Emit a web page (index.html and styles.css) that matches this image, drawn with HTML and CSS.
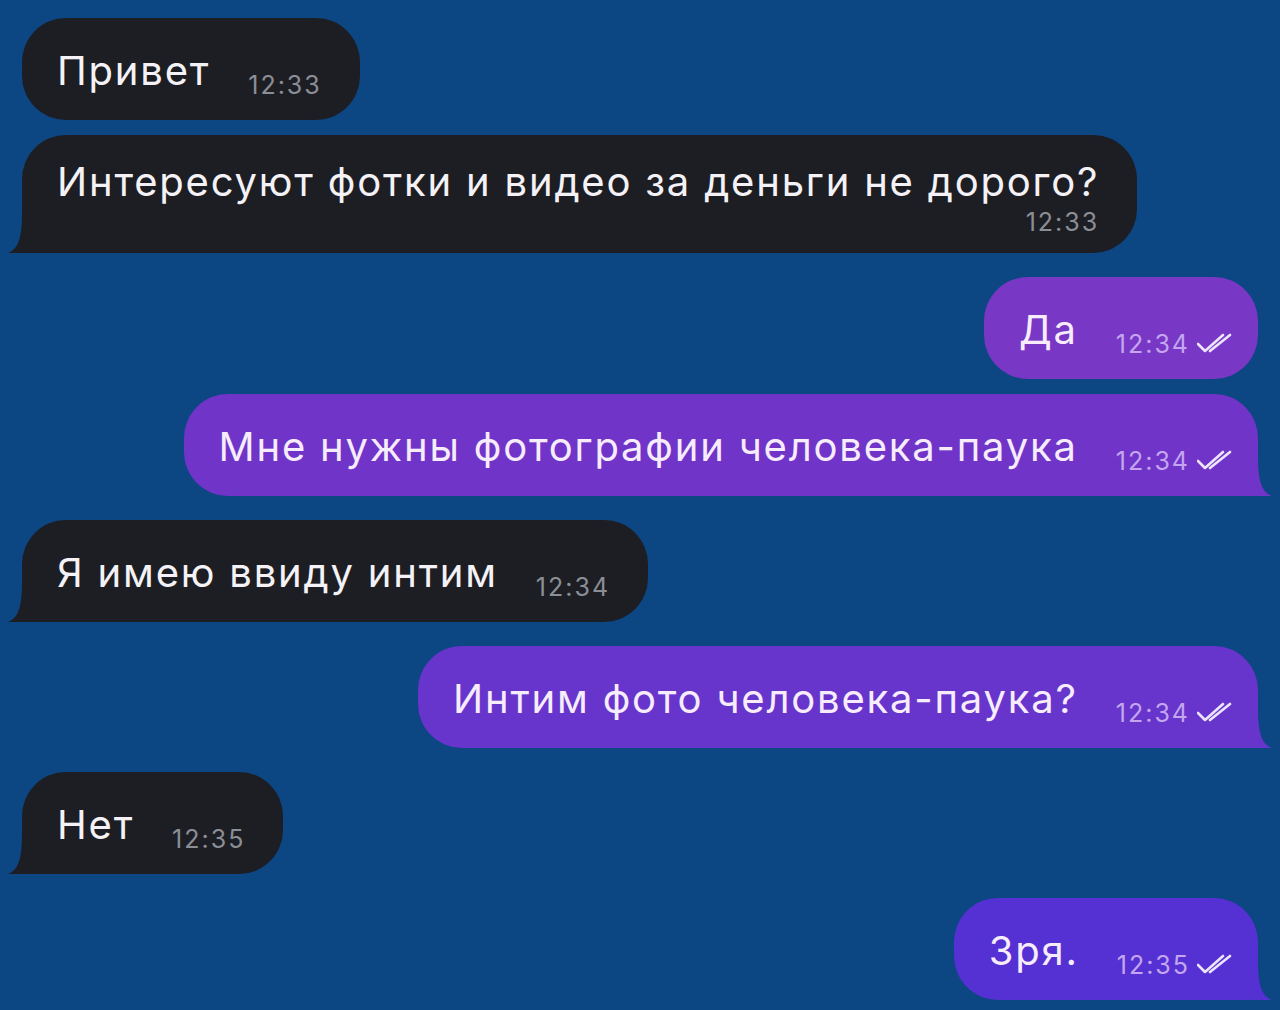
FILE: index.html
```html
<!DOCTYPE html>
<html lang="ru">
<head>
  <meta charset="UTF-8">
  <meta name="viewport" content="width=device-width, initial-scale=1.0">
  <title>Чат</title>
  <link rel="stylesheet" href="styles.css">
</head>
<body>
  <main class="chat">
    <div class="group in">
      <div class="bubble">
        <span class="text">Привет</span>
        <span class="time">12:33</span>
      </div>
      <div class="bubble stacked tail">
        <span class="text">Интересуют фотки и видео за деньги не дорого?</span>
        <span class="time">12:33</span>
        <svg class="tail-svg" viewBox="0 0 24 40"><path d="M24 0 L24 40 L0 40 C10 36 14 26 14 0 Z"/></svg>
      </div>
    </div>

    <div class="group out">
      <div class="bubble out-1">
        <span class="text">Да</span>
        <span class="time">12:34 <svg class="ticks" viewBox="0 0 36 22"><path d="M1 11 L8 18 L26 2 M13 18 L33 2"/></svg></span>
      </div>
      <div class="bubble out-2 tail">
        <span class="text">Мне нужны фотографии человека-паука</span>
        <span class="time">12:34 <svg class="ticks" viewBox="0 0 36 22"><path d="M1 11 L8 18 L26 2 M13 18 L33 2"/></svg></span>
        <svg class="tail-svg" viewBox="0 0 24 40"><path d="M0 0 L0 40 L24 40 C14 36 10 26 10 0 Z"/></svg>
      </div>
    </div>

    <div class="group in">
      <div class="bubble tail">
        <span class="text">Я имею ввиду интим</span>
        <span class="time">12:34</span>
        <svg class="tail-svg" viewBox="0 0 24 40"><path d="M24 0 L24 40 L0 40 C10 36 14 26 14 0 Z"/></svg>
      </div>
    </div>

    <div class="group out">
      <div class="bubble out-3 tail">
        <span class="text">Интим фото человека-паука?</span>
        <span class="time">12:34 <svg class="ticks" viewBox="0 0 36 22"><path d="M1 11 L8 18 L26 2 M13 18 L33 2"/></svg></span>
        <svg class="tail-svg" viewBox="0 0 24 40"><path d="M0 0 L0 40 L24 40 C14 36 10 26 10 0 Z"/></svg>
      </div>
    </div>

    <div class="group in">
      <div class="bubble tail">
        <span class="text">Нет</span>
        <span class="time">12:35</span>
        <svg class="tail-svg" viewBox="0 0 24 40"><path d="M24 0 L24 40 L0 40 C10 36 14 26 14 0 Z"/></svg>
      </div>
    </div>

    <div class="group out">
      <div class="bubble out-4 tail">
        <span class="text">Зря.</span>
        <span class="time">12:35 <svg class="ticks" viewBox="0 0 36 22"><path d="M1 11 L8 18 L26 2 M13 18 L33 2"/></svg></span>
        <svg class="tail-svg" viewBox="0 0 24 40"><path d="M0 0 L0 40 L24 40 C14 36 10 26 10 0 Z"/></svg>
      </div>
    </div>
  </main>
</body>
</html>
```

FILE: styles.css
```css
body {
  margin: 0;
  background-color: #0c4683;
  font-family: Inter, Roboto, "Noto Sans", sans-serif;
  color: #f4f2f6;
  overflow: hidden;
}
.chat {
  display: flex;
  flex-direction: column;
  gap: 24px;
  padding: 18px 22px 0 22px;
}
.group {
  display: flex;
  flex-direction: column;
  gap: 15px;
}
.group.in {
  align-items: flex-start;
}
.group.out {
  align-items: flex-end;
}
.bubble {
  position: relative;
  display: flex;
  align-items: flex-end;
  gap: 38px;
  padding: 30px 38px 26px 35px;
  border-radius: 44px;
  background-color: #1d1e23;
  color: #1d1e23;
}
.bubble .text {
  color: #f4f2f6;
  font-size: 40px;
  line-height: 46px;
  letter-spacing: 1.8px;
}
.bubble .time {
  display: flex;
  align-items: center;
  gap: 7px;
  font-size: 25px;
  letter-spacing: 2px;
  line-height: 30px;
  margin-bottom: -6px;
  color: #8b8e95;
}
.bubble.stacked {
  flex-direction: column;
  align-items: flex-end;
  gap: 0;
  padding: 24px 38px 16px 35px;
}
.bubble.stacked .text {
  align-self: flex-start;
}
.bubble.stacked .time {
  margin-top: 2px;
  margin-bottom: 0;
}
.group.in .bubble.tail {
  border-bottom-left-radius: 0;
}
.group.out .bubble.tail {
  border-bottom-right-radius: 0;
}
.tail-svg {
  position: absolute;
  bottom: 0;
  width: 24px;
  height: 40px;
  fill: currentColor;
}
.group.in .tail-svg {
  left: -14px;
}
.group.out .tail-svg {
  right: -14px;
}
.group.out .bubble {
  padding-right: 25px;
}
.group.out .time {
  color: #c3a6ef;
}
.group.out .text {
  color: #f6ecfc;
}
.ticks {
  width: 36px;
  height: 22px;
  fill: none;
  stroke: #ece4fb;
  stroke-width: 2.6;
  stroke-linecap: round;
  stroke-linejoin: round;
}
.out-1 {
  background-color: #7937c5;
  color: #7937c5;
}
.out-2 {
  background-color: #7134c8;
  color: #7134c8;
}
.out-3 {
  background-color: #6734cc;
  color: #6734cc;
}
.out-4 {
  background-color: #5530d2;
  color: #5530d2;
}
```
